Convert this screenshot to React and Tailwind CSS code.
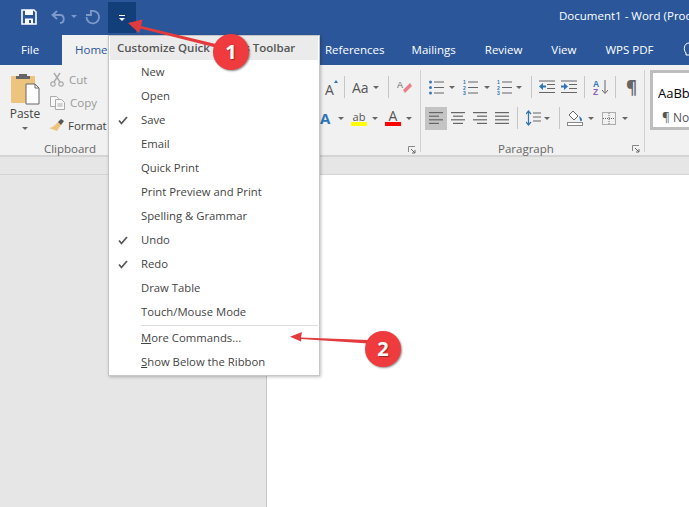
import React from 'react';

const menuItems = [
  { label: 'New' },
  { label: 'Open' },
  { label: 'Save', checked: true },
  { label: 'Email' },
  { label: 'Quick Print' },
  { label: 'Print Preview and Print' },
  { label: 'Spelling & Grammar' },
  { label: 'Undo', checked: true },
  { label: 'Redo', checked: true },
  { label: 'Draw Table' },
  { label: 'Touch/Mouse Mode' },
];

const tabs = [
  { label: 'References', cls: 'ml-[5px]' },
  { label: 'Mailings', cls: 'ml-[27px]' },
  { label: 'Review', cls: 'ml-[29px]' },
  { label: 'View', cls: 'ml-[29px]' },
  { label: 'WPS PDF', cls: 'ml-[29px]' },
];

function Caret({ className = '' }) {
  return <span className={`block shrink-0 w-0 h-0 border-x-[3px] border-x-transparent border-t-[3px] border-t-[#666] ${className}`} />;
}

function Sep({ className = '' }) {
  return <span className={`block shrink-0 w-px h-[22px] bg-[#c6c6c6] ${className}`} />;
}

function Lines({ widths = [14, 14, 14, 14], align = 'left' }) {
  return (
    <svg width="14" height="14" viewBox="0 0 14 14" className="block">
      {widths.map((w, i) => {
        const x = align === 'center' ? (14 - w) / 2 : align === 'right' ? 14 - w : 0;
        return <rect key={i} x={x} y={1 + i * 3.6} width={w} height="1.2" fill="#666" />;
      })}
    </svg>
  );
}

function Launcher({ className = '' }) {
  return (
    <svg className={`shrink-0 ${className}`} width="8" height="8" viewBox="0 0 8 8">
      <path d="M0.5 6V0.5H7" fill="none" stroke="#888" />
      <path d="M3 3l4 4M7 4v3H4" fill="none" stroke="#666" />
    </svg>
  );
}

function BulletIcon({ numbered }) {
  return (
    <svg width="15" height="15" viewBox="0 0 15 15" className="block">
      {numbered ? (
        <g fill="#2f75b5" fontSize="5" fontWeight="700" fontFamily="'Liberation Sans', sans-serif">
          <text x="0" y="4">1</text>
          <text x="0" y="9.5">2</text>
          <text x="0" y="15">3</text>
        </g>
      ) : (
        <g fill="#3a78b8">
          <circle cx="1.5" cy="2" r="1.5" />
          <circle cx="1.5" cy="7.5" r="1.5" />
          <circle cx="1.5" cy="13" r="1.5" />
        </g>
      )}
      <g fill="#666">
        <rect x="5" y="1.5" width="10" height="1" />
        <rect x="5" y="7" width="10" height="1" />
        <rect x="5" y="12.5" width="10" height="1" />
      </g>
    </svg>
  );
}

function IndentIcon({ flip }) {
  return (
    <svg width="16" height="14" viewBox="0 0 16 14" className="block">
      <g fill="#666">
        <rect x="0" y="0.5" width="16" height="1" />
        <rect x="8" y="4" width="8" height="1" />
        <rect x="8" y="8" width="8" height="1" />
        <rect x="0" y="12" width="16" height="1" />
      </g>
      <path d={flip ? 'M0 5.5h3V3l4 3.5L3 10V7.500H0z' : 'M7 5.500H4V3L0 6.500 4 10V7.500h3z'} fill="#2f75b5" />
    </svg>
  );
}

function SaveIcon() {
  return (
    <svg width="16" height="16" viewBox="0 0 16 16" className="block">
      <path d="M1 1h12l2 2v12H1z" fill="none" stroke="#fff" strokeWidth="1.600" />
      <rect x="4" y="1" width="8" height="5" fill="#fff" />
      <rect x="4" y="9.500" width="8" height="5.500" fill="#fff" />
      <rect x="8" y="11" width="2" height="3" fill="#2b579a" />
    </svg>
  );
}

function Ribbon() {
  return (
    <div className="flex h-[92px] bg-[#f1f1f1] border-b-2 border-[#d4d4d4] text-[#444] text-[11.5px]">
      <div className="flex flex-col w-[113px] shrink-0">
        <div className="flex h-[76px] shrink-0">
          <div className="w-[50px] flex flex-col items-center pt-[8px]">
            <svg width="29" height="32" viewBox="0 0 29 32" className="block">
              <rect x="0" y="3" width="24" height="27" rx="1" fill="#edc47d" />
              <path d="M8 3V1h8v2h3v3H5V3z" fill="#666" />
              <path d="M15 11h9l4 4v16H15z" fill="#fff" stroke="#666" />
              <path d="M24 11v4h4" fill="none" stroke="#666" />
            </svg>
            <span className="text-[12px] leading-[16px] mt-[1px]">Paste</span>
            <Caret className="mt-[5px]" />
          </div>
          <div className="flex flex-col pt-[3px]">
            <div className="flex items-center h-[23px] text-[#999] gap-[5px]">
              <svg width="14" height="15" viewBox="0 0 14 15">
                <circle cx="3" cy="12" r="2.200" fill="none" stroke="#aaa" strokeWidth="1.200" />
                <circle cx="11" cy="12" r="2.200" fill="none" stroke="#aaa" strokeWidth="1.200" />
                <path d="M4 10L10 1M10 10L4 1" stroke="#aaa" strokeWidth="1.400" />
              </svg>
              Cut
            </div>
            <div className="flex items-center h-[23px] text-[#999] gap-[5px]">
              <svg width="15" height="14" viewBox="0 0 15 14">
                <path d="M.5.5h6l2 2v8H.5z" fill="#f8f8f8" stroke="#aaa" />
                <path d="M5.500 3.500h6l3 3v7h-9z" fill="#f8f8f8" stroke="#aaa" />
                <path d="M7.500 8h5M7.500 10h5" stroke="#aaa" />
              </svg>
              Copy
            </div>
            <div className="flex items-center h-[23px] gap-[3px] -ml-px">
              <svg width="16" height="15" viewBox="0 0 16 15">
                <path d="M9 4l3 3-4 6-8-3c3 0 6-3 9-6z" fill="#edc47d" />
                <path d="M9 4l3-3 3 2-3 4z" fill="#555" />
              </svg>
              Format
            </div>
          </div>
        </div>
        <div className="leading-[16px] text-[#666] text-center pl-[27px] mt-[0px] shrink-0">Clipboard</div>
      </div>

      <div className="flex flex-col items-end w-[308px] shrink-0 pr-[8px] border-r border-[#d0d0d0] mt-[5px] mb-[3px]">
        <div className="flex items-center shrink-0 h-[30px] mt-[2px]">
          <span className="relative w-[13px] text-[#555] text-[14px] leading-none pt-[5px] mr-[6px]">
            A
            <span className="absolute right-0 top-[2px] w-0 h-0 border-x-[2px] border-x-transparent border-b-[3px] border-b-[#2f75b5]" />
          </span>
          <Sep className="mr-[7px]" />
          <span className="text-[#555] text-[14px] w-[19px] whitespace-nowrap">Aa</span>
          <Caret className="ml-[2px] mr-[9px]" />
          <Sep className="mr-[8px]" />
          <svg width="15" height="15" viewBox="0 0 15 15" className="block">
            <path d="M6 10l7-7 2 3-7 7z" fill="#e8808a" />
            <text x="0" y="8" fontSize="9" fill="#666" fontFamily="'Liberation Sans', sans-serif">A</text>
          </svg>
        </div>
        <div className="flex items-center shrink-0 h-[30px] mt-[1px]">
          <span className="w-[12px] text-[#2f75b5] text-[15px] font-bold leading-none mr-[6px]">A</span>
          <Caret className="mr-[7px]" />
          <span className="flex flex-col items-center w-[16px] mr-[5px]">
            <span className="text-[#555] text-[11px] leading-[11px]">ab</span>
            <span className="block w-[16px] h-[4px] bg-[#ffff00]" />
          </span>
          <Caret className="mr-[7px]" />
          <span className="flex flex-col items-center w-[16px] mr-[5px]">
            <span className="text-[#555] text-[14px] leading-[12px]">A</span>
            <span className="block w-[16px] h-[4px] bg-[#ff0000]" />
          </span>
          <Caret />
        </div>
        <Launcher className="mt-[13px] mr-[-4px]" />
      </div>

      <div className="flex flex-col w-[224px] shrink-0 border-r border-[#d0d0d0] mt-[5px] mb-[3px] pl-[4px]">
        <div className="flex items-center shrink-0 h-[30px] mt-[2px]">
          <span className="ml-[4px]"><BulletIcon /></span>
          <Caret className="ml-[5px]" />
          <span className="ml-[8px]"><BulletIcon numbered /></span>
          <Caret className="ml-[6px]" />
          <span className="ml-[7px]"><BulletIcon numbered /></span>
          <Caret className="ml-[4px]" />
          <Sep className="ml-[9px]" />
          <span className="ml-[7px]"><IndentIcon /></span>
          <span className="ml-[6px]"><IndentIcon flip /></span>
          <Sep className="ml-[7px]" />
          <svg width="16" height="16" viewBox="0 0 16 16" className="block ml-[8px]">
            <text x="0" y="7.500" fontSize="8.500" fontWeight="700" fill="#2f75b5" fontFamily="'Liberation Sans', sans-serif">A</text>
            <text x="0" y="15.500" fontSize="8.500" fontWeight="700" fill="#8a5fb0" fontFamily="'Liberation Sans', sans-serif">Z</text>
            <path d="M12 1v13M9 11l3 3.500 3-3.500" fill="none" stroke="#666" />
          </svg>
          <Sep className="ml-[6px]" />
          <span className="ml-[10px] text-[17px] leading-none font-bold text-[#666]">¶</span>
        </div>
        <div className="flex items-center shrink-0 h-[30px] mt-[1px]">
          <span className="flex items-center justify-center w-[22px] h-[23px] bg-[#c4c4c4]">
            <Lines widths={[14, 10, 14, 10]} />
          </span>
          <span className="ml-[4px]"><Lines widths={[14, 10, 14, 10]} align="center" /></span>
          <span className="ml-[8px]"><Lines widths={[14, 10, 14, 10]} align="right" /></span>
          <span className="ml-[8px]"><Lines /></span>
          <Sep className="ml-[8px]" />
          <svg width="15" height="16" viewBox="0 0 15 16" className="block ml-[8px]">
            <path d="M2.500 1v14M0 4l2.500-3L5 4M0 12l2.500 3L5 12" fill="none" stroke="#2f75b5" strokeWidth="1.200" />
            <path d="M7 3h8M7 7h8M7 11h8" stroke="#666" />
          </svg>
          <Caret className="ml-[3px]" />
          <Sep className="ml-[9px]" />
          <svg width="17" height="16" viewBox="0 0 17 16" className="block ml-[7px]">
            <path d="M6 1l5 5-4 4-5-5z" fill="#fff" stroke="#666" />
            <path d="M12 6c2 1 3 3 3 4 0 1.500-2 1.500-2 0z" fill="#2f75b5" />
            <rect x="0.500" y="12.500" width="15" height="3" fill="#fff" stroke="#888" />
          </svg>
          <Caret className="ml-[4px]" />
          <svg width="14" height="13" viewBox="0 0 14 13" className="block ml-[8px]">
            <rect x="0.500" y="0.500" width="13" height="12" fill="none" stroke="#666" strokeDasharray="1 1" />
            <path d="M7 1v11M1 6.500h12" stroke="#666" strokeDasharray="1 1" />
          </svg>
          <Caret className="ml-[6px]" />
        </div>
        <div className="flex items-end justify-between shrink-0 h-[24px] pr-[4px]">
          <span className="leading-[16px] text-[#666] ml-[73px]">Paragraph</span>
          <Launcher className="mb-[4px]" />
        </div>
      </div>

      <div className="flex-1 pl-[5px] pt-[5px] overflow-hidden">
        <div className="w-[60px] h-[60px] bg-white border-[3px] border-[#bdbdbd] pl-[5px] text-black">
          <div className="text-[13px] leading-[16px] mt-[12px] whitespace-nowrap">AaBb</div>
          <div className="text-[12px] leading-[16px] mt-[9px] ml-[4px] text-[#555] whitespace-nowrap">¶ No</div>
        </div>
      </div>
    </div>
  );
}

export default function App() {
  return (
    <div className="relative w-[689px] h-[507px] overflow-hidden bg-[#e6e6e6] font-['Open_Sans','Noto_Sans',sans-serif]">
      <div className="flex items-start h-[35px] bg-[#2b579a] text-white">
        <span className="shrink-0 ml-[21px] mt-[9px]"><SaveIcon /></span>
        <svg width="16" height="14" viewBox="0 0 16 14" className="shrink-0 ml-[14px] mt-[10px]">
          <path d="M6 1L1.500 5 6 9M2 5h7c5 0 5 8 0 8" fill="none" stroke="#7d9ac8" strokeWidth="1.800" />
        </svg>
        <span className="block shrink-0 ml-[4px] mt-[15px] w-0 h-0 border-x-[3px] border-x-transparent border-t-[3px] border-t-[#7d9ac8]" />
        <svg width="16" height="16" viewBox="0 0 16 16" className="shrink-0 ml-[8px] mt-[9px]">
          <path d="M5 2.500A6.300 6.300 0 1 1 1.500 8M6 1v5H1" fill="none" stroke="#7d9ac8" strokeWidth="1.800" />
        </svg>
        <span className="flex flex-col shrink-0 items-center justify-center gap-[2px] w-[28px] h-[31px] ml-[7px] mt-[2px] bg-[#123e7a]">
          <span className="block w-[6px] h-px bg-white" />
          <span className="block w-0 h-0 border-x-[3px] border-x-transparent border-t-[3px] border-t-white" />
        </span>
        <span className="shrink-0 ml-[423px] mt-[7px] text-[11.5px] leading-[18px] whitespace-nowrap">Document1 - Word (Product</span>
      </div>

      <div className="flex items-center h-[30px] bg-[#2b579a] text-white text-[11.5px] whitespace-nowrap">
        <span className="shrink-0 w-[62px] pl-[21px]">File</span>
        <span className="flex items-center shrink-0 w-[258px] h-full pl-[13px] bg-[#f1f1f1] text-[#2b579a]">Home</span>
        {tabs.map(t => (
          <span key={t.label} className={`shrink-0 ${t.cls}`}>{t.label}</span>
        ))}
        <svg width="12" height="16" viewBox="0 0 12 16" className="ml-[29px] shrink-0">
          <path d="M3 11C0 8 1 1 6 1s6 7 3 10v2H3z" fill="none" stroke="#fff" />
        </svg>
      </div>

      <Ribbon />

      <div className="h-[18px] border-b border-[#d4d4d4]" />
      <div className="ml-[266px] h-[332px] bg-white border-l border-[#c6c6c6]" />

      <div className="absolute left-[108px] top-[35px] w-[212px] h-[341px] bg-white border border-[#c6c6c6] shadow-[1px_1px_3px_rgba(0,0,0,0.25)] text-[11.3px] text-[#444] z-10">
        <div className="flex items-center h-[24px] mx-px pl-[7px] bg-[#ebebeb] text-[11.500px] font-semibold text-[#555] whitespace-nowrap">Customize Quick Access Toolbar</div>
        {menuItems.map(item => (
          <div key={item.label} className="relative flex items-center h-[24px] pl-[32px]">
            {item.checked && (
              <svg width="10" height="9" viewBox="0 0 10 9" className="absolute left-[9px] top-[8px]">
                <path d="M1 4.500L3.500 7.500 9 1" fill="none" stroke="#555" strokeWidth="1.700" />
              </svg>
            )}
            {item.label}
          </div>
        ))}
        <div className="h-px ml-[32px] mr-px bg-[#dcdcdc] mt-px" />
        <div className="h-[24px] flex items-center pl-[32px]"><span className="underline">M</span>ore Commands...</div>
        <div className="h-[24px] flex items-center pl-[32px]"><span className="underline">S</span>how Below the Ribbon</div>
      </div>

      <svg width="689" height="507" viewBox="0 0 689 507" className="absolute left-0 top-0 z-20 pointer-events-none">
        <path d="M222 45.500L141 26l1.500-6.500L128 23l11 10 1.500-4.500L221.500 49z" fill="#e33b3d" />
        <path d="M368 340L301 337.500 302 332l-12 4.700 11 4.800.3-2.500L368 343.500z" fill="#e33b3d" />
      </svg>
      <span className="absolute left-[213px] top-[34px] z-20 flex items-center justify-center w-[36px] h-[36px] rounded-full bg-[#ef3b3d] shadow-[1px_1px_2px_rgba(0,0,0,0.45)] text-white text-[20px] font-bold [text-shadow:1px_1px_1px_rgba(0,0,0,0.35)]">1</span>
      <span className="absolute left-[365px] top-[331px] z-20 flex items-center justify-center w-[36px] h-[36px] rounded-full bg-[#ef3b3d] shadow-[1px_1px_2px_rgba(0,0,0,0.45)] text-white text-[20px] font-bold [text-shadow:1px_1px_1px_rgba(0,0,0,0.35)]">2</span>
    </div>
  );
}
